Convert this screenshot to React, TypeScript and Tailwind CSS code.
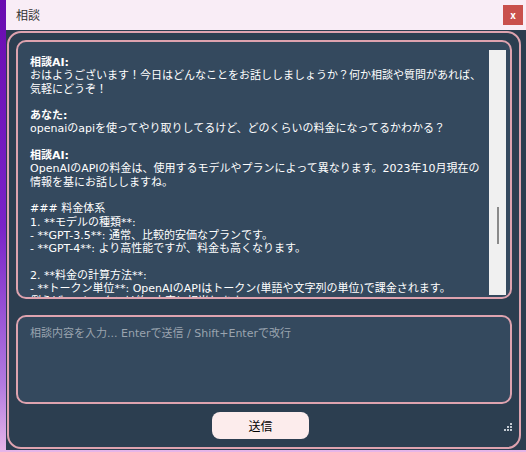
import React from 'react';

const FONT = { fontFamily: '"Noto Sans CJK JP", "Liberation Sans", sans-serif' };
const LOG_FONT = { fontFamily: '"DejaVu Sans", "Noto Sans CJK JP", sans-serif' };

type Line = { text: string; bold?: boolean };

const LINES: Line[] = [
  { text: '相談AI:', bold: true },
  { text: 'おはようございます！今日はどんなことをお話ししましょうか？何か相談や質問があれば、' },
  { text: '気軽にどうぞ！' },
  { text: '' },
  { text: 'あなた:', bold: true },
  { text: 'openaiのapiを使ってやり取りしてるけど、どのくらいの料金になってるかわかる？' },
  { text: '' },
  { text: '相談AI:', bold: true },
  { text: 'OpenAIのAPIの料金は、使用するモデルやプランによって異なります。2023年10月現在の' },
  { text: '情報を基にお話ししますね。' },
  { text: '' },
  { text: '### 料金体系' },
  { text: '1. **モデルの種類**:' },
  { text: '- **GPT-3.5**: 通常、比較的安価なプランです。' },
  { text: '- **GPT-4**: より高性能ですが、料金も高くなります。' },
  { text: '' },
  { text: '2. **料金の計算方法**:' },
  { text: '- **トークン単位**: OpenAIのAPIはトークン(単語や文字列の単位)で課金されます。' },
  { text: '例えば、1トークンは約4文字に相当します。' },
];

function Grip() {
  return (
    <svg width="8" height="8" viewBox="0 0 8 8" className="shrink-0">
      {[
        [6, 0],
        [3, 3],
        [6, 3],
        [0, 6],
        [3, 6],
        [6, 6],
      ].map(([x, y]) => (
        <rect key={`${x}-${y}`} x={x} y={y} width="2" height="2" fill="#c3cad2" />
      ))}
    </svg>
  );
}

export default function App() {
  return (
    <div
      className="w-[526px] h-[452px] overflow-hidden flex flex-col pl-[6px] bg-[linear-gradient(to_bottom,#6a0cb0_0%,#7a22c8_50%,#b27ae0_85%,#e7b6e8_100%)]"
      style={FONT}
    >
      <div className="h-[30px] shrink-0 bg-[#f9edf6] flex items-center justify-between pl-[10px] pr-[3px]">
        <span className="text-[12px] text-[#333]">相談</span>
        <button
          type="button"
          className="w-[20px] h-[20px] bg-[#c9504c] text-white text-[10px] font-bold flex items-center justify-center leading-none"
        >
          x
        </button>
      </div>

      <div className="h-[420px] shrink-0 bg-[#2c3d4f] pt-[1px] pb-[1px] pl-[1px] pr-[5px]">
        <div className="h-full border-2 border-[#dea3af] rounded-[14px] bg-[#2c3e50] p-[7px] flex flex-col">
          {/* chat log */}
          <div className="h-[259px] shrink-0 border-2 border-[#dea3af] rounded-[10px] bg-[#34495e] flex overflow-hidden">
            <div
              className="flex-1 overflow-hidden pl-[12px] pt-[14px] text-[11px] leading-[13.3px] text-white whitespace-pre"
              style={LOG_FONT}
            >
              {LINES.map((l, i) => (
                <div key={i} className={l.bold ? 'font-bold' : ''}>
                  {l.text || '\u00a0'}
                </div>
              ))}
            </div>
            <div className="w-[17px] shrink-0 mt-[8px] mb-[2px] mr-[4px] bg-[#f0f0f0] flex justify-center">
              <div className="w-[2px] h-[37px] mt-[157px] bg-[#8a8a8a]" />
            </div>
          </div>

          {/* input */}
          <div
            className="h-[89px] shrink-0 mt-[16px] border-2 border-[#dea3af] rounded-[10px] bg-[#34495e] pl-[12px] pt-[9px] text-[11px] leading-[16px] text-[#9aa4af]"
            style={LOG_FONT}
          >
            相談内容を入力... Enterで送信 / Shift+Enterで改行
          </div>

          <div className="flex items-center mt-[8px] pl-[196px]">
            <button
              type="button"
              className="w-[97px] h-[27px] rounded-[8px] bg-[#fcecec] text-[12px] text-black flex items-center justify-center"
            >
              送信
            </button>
            <div className="ml-auto mt-[2px]">
              <Grip />
            </div>
          </div>
        </div>
      </div>
    </div>
  );
}
